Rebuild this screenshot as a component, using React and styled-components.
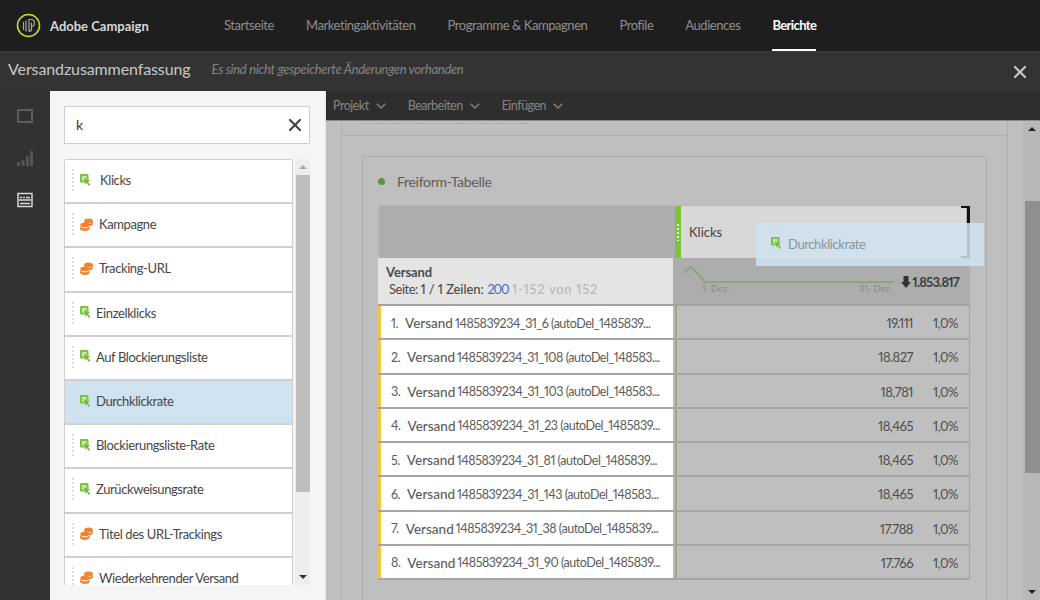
import React from "react";
import styled, { createGlobalStyle } from "styled-components";
import { ChevronDown, X } from "lucide-react";

const GlobalStyle = createGlobalStyle`
  html, body { margin: 0; padding: 0; }
  body {
    font-family: "Lato", "Noto Sans", sans-serif;
    font-variant-numeric: proportional-nums;
    background: #bfbfbf;
  }
  * { box-sizing: border-box; }
`;

const Page = styled.div`
  width: 1040px;
  height: 600px;
  overflow: hidden;
  display: flex;
  flex-direction: column;
  position: relative;
`;

const Header = styled.header`
  height: 51px;
  flex: none;
  background: #1e1e1e;
  display: flex;
  align-items: center;
  padding-left: 16px;
`;

const Brand = styled.div`
  width: 208px;
  display: flex;
  align-items: center;
  gap: 9px;
  color: #d8d8d8;
  font-size: 13px;
  font-weight: 700;
`;

const Nav = styled.nav`
  display: flex;
  gap: 32px;
  height: 51px;
`;

const NavItem = styled.a`
  display: flex;
  align-items: center;
  height: 100%;
  font-size: 13px;
  letter-spacing: ${(p) => (p.$active ? "-0.6px" : "-0.44px")};
  color: ${(p) => (p.$active ? "#ffffff" : "#8e8e8e")};
  font-weight: ${(p) => (p.$active ? 700 : 400)};
  border-bottom: 2px solid ${(p) => (p.$active ? "#ffffff" : "transparent")};
`;

const TitleBar = styled.div`
  height: 40px;
  flex: none;
  background: #333333;
  display: flex;
  align-items: center;
  padding: 0 10px 6px 8px;
  border-top: 1px solid #3a3a3a;
`;

const Title = styled.h1`
  margin: 0 21px 0 0;
  font-size: 16px;
  font-weight: 400;
  letter-spacing: -0.1px;
  color: #c8c8c8;
`;

const Unsaved = styled.span`
  flex: 1;
  font-size: 13px;
  font-style: italic;
  letter-spacing: -0.32px;
  color: #858585;
`;

const CloseIcon = styled(X)`
  margin-top: 6px;
`;

const Body = styled.div`
  flex: 1;
  min-height: 0;
  display: flex;
`;

const Rail = styled.aside`
  width: 50px;
  flex: none;
  background: #323232;
  display: flex;
  flex-direction: column;
  align-items: center;
  padding-top: 15px;
  gap: 22px;
`;

const RailIcon = styled.svg`
  width: 20px;
  height: 20px;
  display: block;
`;

const Panel = styled.section`
  width: 276px;
  flex: none;
  background: #f5f5f5;
  padding: 15px 15px 15px 14px;
  display: flex;
  flex-direction: column;
  border-right: 1px solid #e8e8e8;
`;

const SearchBox = styled.div`
  height: 38px;
  flex: none;
  background: #ffffff;
  border: 1px solid #cfcfcf;
  display: flex;
  align-items: center;
  justify-content: space-between;
  padding: 0 4px 0 11px;
  font-size: 14px;
  color: #3a3a3a;
  margin-bottom: 15px;
  span { padding-bottom: 2px; }
`;

const ListWrap = styled.div`
  flex: 1;
  min-height: 0;
  display: flex;
  overflow: hidden;
`;

const List = styled.div`
  width: 229px;
  flex: none;
  height: 440px;
  border: 1px solid #cfcfcf;
  border-radius: 3px 3px 0 0;
  background: #ffffff;
`;

const Item = styled.div`
  height: 44.2px;
  display: flex;
  align-items: center;
  padding: 0 0 2px 7px;
  font-size: 13px;
  letter-spacing: -0.4px;
  color: #474747;
  border-bottom: 2px solid #d0d0d0;
  background: ${(p) => (p.$selected ? "#cfe2f0" : "#ffffff")};
`;

const Grip = styled.span`
  width: 2px;
  height: 24px;
  flex: none;
  margin-right: 6px;
  background-image: radial-gradient(circle, #dddddd 1px, transparent 1px);
  background-size: 2px 4px;
`;

const ItemIcon = styled.svg`
  width: ${(p) => p.$w}px;
  height: 13px;
  flex: none;
  margin-right: ${(p) => p.$gap}px;
`;

const ScrollTrack = styled.div`
  width: ${(p) => p.$w}px;
  flex: none;
  margin-left: ${(p) => p.$ml || 0}px;
  background: ${(p) => p.$bg};
  display: flex;
  flex-direction: column;
  align-items: center;
`;

const ScrollArrow = styled.div`
  flex: none;
  height: ${(p) => p.$h}px;
  display: flex;
  align-items: center;
  justify-content: center;
  &::before {
    content: "";
    border-left: 4px solid transparent;
    border-right: 4px solid transparent;
    ${(p) => (p.$up ? "border-bottom" : "border-top")}: 4px solid ${(p) => p.$color};
  }
`;

const ScrollSpacer = styled.div`
  flex: ${(p) => p.$size};
  width: 100%;
`;

const ScrollThumb = styled.div`
  height: ${(p) => p.$h}px;
  flex: none;
  width: ${(p) => p.$w}px;
  align-self: flex-end;
  background: ${(p) => p.$bg};
`;

const Main = styled.main`
  flex: 1;
  min-width: 0;
  display: flex;
  flex-direction: column;
  background: #bfbfbf;
`;

const MenuBar = styled.div`
  height: 30px;
  flex: none;
  background: #2e2e2e;
  display: flex;
  align-items: center;
  padding-left: 7px;
  gap: 19px;
  font-size: 12.5px;
  letter-spacing: -0.5px;
  color: #858585;
  border-bottom: 1px solid #8a8a8a;
`;

const MenuItem = styled.span`
  display: flex;
  align-items: center;
  gap: 4px;
`;

const Viewport = styled.div`
  flex: 1;
  min-height: 0;
  display: flex;
  overflow: hidden;
`;

const Canvas = styled.div`
  flex: 1;
  min-width: 0;
  padding-left: 15px;
`;

const Sheet = styled.div`
  width: 667px;
  height: 100%;
  border-left: 1px solid #b0b0b0;
  border-right: 1px solid #b0b0b0;
  padding-top: 2px;
`;

const CutOffLine = styled.div`
  width: 166px;
  height: 12px;
  margin-left: 20px;
  border-top: 1px dashed #ababab;
`;

const SheetInner = styled.div`
  border-top: 1px solid #b0b0b0;
  padding: 20px 20px 0 20px;
  height: 100%;
`;

const Card = styled.div`
  width: 625px;
  border: 1px solid #adadad;
  padding: 0 15px 20px 15px;
`;

const CardTitle = styled.div`
  height: 48px;
  display: flex;
  align-items: center;
  font-size: 14px;
  letter-spacing: -0.3px;
  color: #5d5d5d;
  gap: 12px;
`;

const Dot = styled.span`
  width: 7px;
  height: 7px;
  border-radius: 50%;
  background: #5f9440;
`;

const Table = styled.div`
  width: 592px;
  position: relative;
`;

const HeadRow = styled.div`
  height: 53px;
  display: flex;
  background: #adadad;
  border: 1px solid #b8b8b8;
  border-bottom: 0;
`;

const HeadBlank = styled.div`
  width: 296px;
  flex: none;
`;

const Strip = styled.div`
  width: 6px;
  flex: none;
  background: #7dc43a;
  display: flex;
  align-items: center;
  justify-content: center;
  &::before {
    content: "";
    width: 2px;
    height: 18px;
    background-image: radial-gradient(circle, #e8f5d8 1px, transparent 1px);
    background-size: 2px 4px;
  }
`;

const HeadCell = styled.div`
  width: 285px;
  flex: none;
  background: #d8d8d8;
  display: flex;
  align-items: center;
  padding: 0 0 0 8px;
  font-size: 13px;
  color: #444444;
`;

const SubRow = styled.div`
  height: 48px;
  display: flex;
  background: #adadad;
  border-bottom: 2px solid #a3a3a3;
`;

const DimHead = styled.div`
  width: 295px;
  flex: none;
  background: #e4e4e4;
  padding: 6px 8px;
  color: #4a4a4a;
`;

const DimName = styled.div`
  font-size: 13px;
  font-weight: 700;
  line-height: 16px;
  letter-spacing: -0.1px;
`;

const Pager = styled.div`
  font-size: 13px;
  line-height: 18px;
  padding-left: 3px;
  white-space: nowrap;
  letter-spacing: -0.5px;
  b { font-weight: 500; letter-spacing: -0.1px; }
  span { color: #3f6fc4; margin-left: 1px; letter-spacing: -1.2px; }
  em { font-style: normal; font-weight: 500; color: #b8b8b8; letter-spacing: 0.7px; margin-left: 1px; }
`;

const Sparkline = styled.div`
  flex: 1;
  position: relative;
  display: flex;
  align-items: center;
  justify-content: flex-end;
  align-self: flex-start;
  height: 18px;
  margin-top: 15px;
  padding-right: 11px;
  font-size: 13px;
  font-weight: 700;
  letter-spacing: -0.8px;
  color: #3e3e3e;
  gap: 1px;
`;

const SparkSvg = styled.svg`
  position: absolute;
  left: 10px;
  top: -9px;
`;

const SparkLabel = styled.span`
  position: absolute;
  top: 10px;
  left: ${(p) => p.$left}px;
  font-size: 9px;
  font-weight: 400;
  color: #8a8a8a;
  letter-spacing: 0.3px;
`;

const Row = styled.div`
  height: 34.25px;
  display: flex;
  background: #b9b9b9;
  border-bottom: 2px solid #a5a5a5;
`;

const RowName = styled.div`
  width: 295px;
  flex: none;
  background: #ffffff;
  border-left: 3px solid #f5c542;
  display: flex;
  align-items: center;
  padding: 2px 0 0 10px;
  font-size: 12.5px;
  color: #5c5c5c;
  white-space: nowrap;
  letter-spacing: -0.47px;
  b { font-size: 13.5px; font-weight: 500; margin: 0 2px 0 7px; letter-spacing: 0; }
`;

const RowValues = styled.div`
  flex: 1;
  display: flex;
  justify-content: flex-end;
  align-items: center;
  border-left: 2px solid #9aac84;
  margin-left: 2px;
  padding: 2px 11px 0 0;
  font-size: 13px;
  letter-spacing: -0.5px;
  color: #4d4d4d;
  background: #bfbfbf;
  border-right: 1px solid #a5a5a5;
`;

const Pct = styled.span`
  width: 45px;
  text-align: right;
`;

const PageScroll = styled(ScrollTrack)`
  height: 100%;
`;

/* drag ghost and drop bracket lie over the table */
const DragGhost = styled.div`
  position: absolute;
  left: 378px;
  top: 18px;
  width: 228px;
  height: 43px;
  background: rgba(207, 226, 240, 0.85);
  display: flex;
  align-items: center;
  padding: 0 0 2px 7px;
  font-size: 13px;
  letter-spacing: -0.4px;
  color: #8d959b;
`;

const Bracket = styled.div`
  position: absolute;
  left: 583px;
  top: 1px;
  width: 9px;
  height: 52px;
  border: 2px solid #111111;
  border-right-width: 3px;
  border-left: 0;
`;

const ClickIcon = ({ gap }) => (
  <ItemIcon $w={11} $gap={gap} viewBox="0 0 11 13">
    <rect x="0" y="0" width="8.5" height="8.5" rx="1" fill="#7cc142" />
    <rect x="2" y="2" width="4.5" height="4.5" fill="#c9e8ae" />
    <path d="M3.5 3.5l7 3-2.5 1.2 2.4 3.4-1.4 1.2-2.4-3.3-1.3 2.3z" fill="#6fbc36" stroke="#ffffff" strokeWidth="0.3" />
  </ItemIcon>
);

const DimIcon = ({ gap }) => (
  <ItemIcon $w={13} $gap={gap} viewBox="0 0 13 13">
    <ellipse cx="8.5" cy="3" rx="4.5" ry="2.5" fill="#f08232" />
    <path d="M4.3 4c.8 1.2 2.5 2 4.2 2 1.8 0 3.5-.6 4.5-1.8v1.5C13 7 11 8 9.5 8.3 9.5 6.5 7 5 4.3 5z" fill="#f08232" />
    <ellipse cx="4.8" cy="7" rx="4.5" ry="2.3" fill="#f08232" />
    <path d="M0 8c1 1.6 2.6 2.3 4.8 2.3S8.6 9.5 9.6 8v2.5C9.6 12 7.5 13 4.8 13S0 12 0 10.5z" fill="#f08232" />
  </ItemIcon>
);

const items = [
  { label: "Klicks", kind: "click", gap: 9 },
  { label: "Kampagne", kind: "dim", gap: 6 },
  { label: "Tracking-URL", kind: "dim", gap: 6 },
  { label: "Einzelklicks", kind: "click", gap: 5 },
  { label: "Auf Blockierungsliste", kind: "click", gap: 5 },
  { label: "Durchklickrate", kind: "click", gap: 5, selected: true },
  { label: "Blockierungsliste-Rate", kind: "click", gap: 5 },
  { label: "Zurückweisungsrate", kind: "click", gap: 5 },
  { label: "Titel des URL-Trackings", kind: "dim", gap: 6 },
  { label: "Wiederkehrender Versand", kind: "dim", gap: 6 },
];

const rows = [
  ["1485839234_31_6 (autoDel_1485839...", "19.111"],
  ["1485839234_31_108 (autoDel_148583...", "18.827"],
  ["1485839234_31_103 (autoDel_148583...", "18,781"],
  ["1485839234_31_23 (autoDel_1485839...", "18,465"],
  ["1485839234_31_81 (autoDel_1485839...", "18,465"],
  ["1485839234_31_143 (autoDel_148583...", "18,465"],
  ["1485839234_31_38 (autoDel_1485839...", "17.788"],
  ["1485839234_31_90 (autoDel_1485839...", "17.766"],
];

const navLinks = [
  "Startseite",
  "Marketingaktivitäten",
  "Programme & Kampagnen",
  "Profile",
  "Audiences",
];

const App = () => (
  <Page>
    <GlobalStyle />
    <Header>
      <Brand>
        <svg width="25" height="25" viewBox="0 0 25 25" fill="none">
          <circle cx="12.5" cy="12.5" r="11" stroke="#c4d92e" strokeWidth="1.6" />
          <path d="M7.5 9v8M10 7.5v11M13 18.5V6.5h2.5c2 0 3 1.5 3 3.5s-1.3 3.5-3.5 3.5M15.5 9.5v6c0 2-1.2 3-2.5 3" stroke="#a8a89c" strokeWidth="1.2" />
        </svg>
        Adobe Campaign
      </Brand>
      <Nav>
        {navLinks.map((l) => (
          <NavItem key={l}>{l}</NavItem>
        ))}
        <NavItem $active>Berichte</NavItem>
      </Nav>
    </Header>

    <TitleBar>
      <Title>Versandzusammenfassung</Title>
      <Unsaved>Es sind nicht gespeicherte Änderungen vorhanden</Unsaved>
      <CloseIcon size={20} color="#c8c8c8" strokeWidth={2.6} />
    </TitleBar>

    <Body>
      <Rail>
        <RailIcon viewBox="0 0 20 20" fill="none">
          <rect x="3" y="4" width="14" height="12" stroke="#5c5c5c" strokeWidth="2" />
        </RailIcon>
        <RailIcon viewBox="0 0 20 20">
          <path d="M2 14h3v4H2zM6.5 12h3v6h-3zM11 8h3v10h-3zM15 3h3v15h-3z" fill="#555555" />
        </RailIcon>
        <RailIcon viewBox="0 0 20 20" fill="none">
          <rect x="3" y="3.5" width="14" height="13" stroke="#d8d8d8" strokeWidth="1.5" />
          <path d="M5 7.5h2M8 7.5h2M11 7.5h4M4 10h12M5 13.5h10" stroke="#d8d8d8" strokeWidth="1.5" />
        </RailIcon>
      </Rail>

      <Panel>
        <SearchBox>
          <span>k</span>
          <X size={20} color="#3c4650" strokeWidth={2.6} />
        </SearchBox>
        <ListWrap>
          <List>
            {items.map((it) => (
              <Item key={it.label} $selected={it.selected}>
                <Grip />
                {it.kind === "click" ? <ClickIcon gap={it.gap} /> : <DimIcon gap={it.gap} />}
                {it.label}
              </Item>
            ))}
          </List>
          <ScrollTrack $w={15} $ml={2} $bg="#ededed">
            <ScrollArrow $up $h={16} $color="#a8a8a8" />
            <ScrollThumb $h={317} $w={14} $bg="#bdbdbd" />
            <ScrollSpacer $size={1} />
            <ScrollArrow $h={16} $color="#333333" />
          </ScrollTrack>
        </ListWrap>
      </Panel>

      <Main>
        <MenuBar>
          <MenuItem>Projekt <ChevronDown size={16} strokeWidth={2} /></MenuItem>
          <MenuItem>Bearbeiten <ChevronDown size={16} strokeWidth={2} /></MenuItem>
          <MenuItem>Einfügen <ChevronDown size={16} strokeWidth={2} /></MenuItem>
        </MenuBar>
        <Viewport>
          <Canvas>
            <Sheet>
              <CutOffLine />
              <SheetInner>
                <Card>
                  <CardTitle>
                    <Dot />
                    Freiform-Tabelle
                  </CardTitle>
                  <Table>
                    <HeadRow>
                      <HeadBlank />
                      <Strip />
                      <HeadCell>Klicks</HeadCell>
                    </HeadRow>
                    <SubRow>
                      <DimHead>
                        <DimName>Versand</DimName>
                        <Pager>
                          Seite: <b>1 / 1 Zeilen:</b> <span>200</span> <em>1-152 von 152</em>
                        </Pager>
                      </DimHead>
                      <Sparkline>
                        <SparkSvg width="214" height="24" viewBox="0 0 214 24" fill="none">
                          <path d="M1 9 L8 3 L22 18 H211" stroke="#8ba878" strokeWidth="2" />
                        </SparkSvg>
                        <SparkLabel $left={29}>1. Dez.</SparkLabel>
                        <SparkLabel $left={186}>31. Dez.</SparkLabel>
                        <svg width="10" height="12" viewBox="0 0 10 12">
                          <path d="M2.5 0h5v6H10l-5 6-5-6h2.5z" fill="#333333" />
                        </svg>
                        1.853.817
                      </Sparkline>
                    </SubRow>
                    {rows.map((r, i) => (
                      <Row key={r[0]}>
                        <RowName>
                          {i + 1}.<b>Versand</b>{r[0]}
                        </RowName>
                        <RowValues>
                          {r[1]}
                          <Pct>1,0%</Pct>
                        </RowValues>
                      </Row>
                    ))}
                    <Bracket />
                    <DragGhost>
                      <Grip />
                      <ClickIcon gap={6} />
                      Durchklickrate
                    </DragGhost>
                  </Table>
                </Card>
              </SheetInner>
            </Sheet>
          </Canvas>
          <PageScroll $w={17} $bg="#b8b8b8">
            <ScrollArrow $up $h={16} $color="#222222" />
            <ScrollSpacer $size={64} />
            <ScrollThumb $h={272} $w={15} $bg="#8f8f8f" />
            <ScrollSpacer $size={111} />
            <ScrollArrow $h={16} $color="#222222" />
          </PageScroll>
        </Viewport>
      </Main>
    </Body>
  </Page>
);

export default App;
